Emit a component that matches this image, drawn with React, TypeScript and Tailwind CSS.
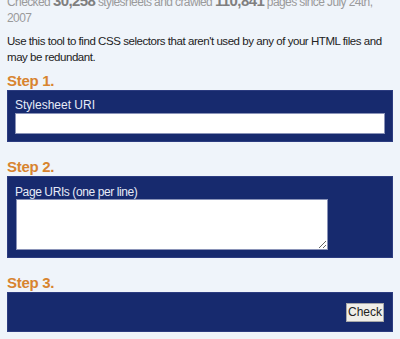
export default function App() {
  return (
    <div className="w-[400px] h-[339px] overflow-hidden bg-[#eff4fa] px-[7px] font-['Liberation_Sans',Arial,sans-serif] text-[12px]">
      <p className="mt-[-7px] text-[12px] leading-[16px] tracking-[-0.6px] text-[#9a9a9a]">
        Checked <b className="text-[15px] text-[#7f7f7f]">30,258</b> stylesheets and crawled{" "}
        <b className="text-[15px] text-[#7f7f7f]">110,841</b> pages since July 24th, 2007
      </p>
      <p className="mt-[7px] text-[11.5px] leading-[16px] tracking-[-0.45px] text-[#222]">
        Use this tool to find CSS selectors that aren't used by any of your HTML files and may be redundant.
      </p>

      <h2 className="mt-[7px] text-[15px] font-bold leading-[18px] tracking-[-0.3px] text-[#d8842f]">Step 1.</h2>
      <div className="border border-[#2c3c80] bg-[#172a6e] px-[7px] pt-[7px] pb-[7px]">
        <label className="block leading-[14px] text-[#e6ebf7]">Stylesheet URI</label>
        <input
          type="text"
          className="mt-[1px] block h-[21px] w-full border border-[#8a93b8] bg-white"
        />
      </div>

      <h2 className="mt-[16px] text-[15px] font-bold leading-[18px] tracking-[-0.3px] text-[#d8842f]">Step 2.</h2>
      <div className="border border-[#2c3c80] bg-[#172a6e] px-[7px] pt-[8px] pb-[7px]">
        <label className="block leading-[14px] tracking-[-0.4px] text-[#e6ebf7]">Page URIs (one per line)</label>
        <textarea className="ml-[1px] block h-[51px] w-[312px] border border-[#8a93b8] bg-white" />
      </div>

      <h2 className="mt-[16px] text-[15px] font-bold leading-[18px] tracking-[-0.3px] text-[#d8842f]">Step 3.</h2>
      <div className="flex h-[40px] items-center justify-end border border-[#2c3c80] bg-[#172a6e] pr-[8px]">
        <button className="h-[19px] w-[38px] border border-[#a8a8a8] bg-[#f0eee8] text-[12px] leading-[17px] text-[#222]">
          Check
        </button>
      </div>
    </div>
  );
}
